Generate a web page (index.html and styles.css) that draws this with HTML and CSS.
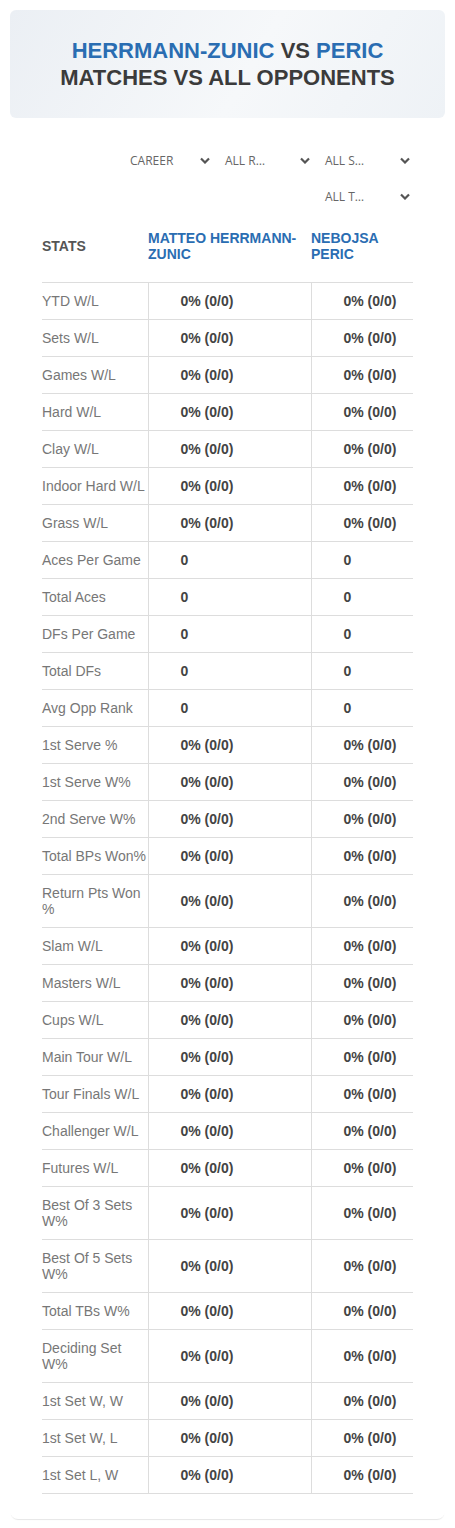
FILE: index.html
```html
<!DOCTYPE html>
<html lang="en">
<head>
  <meta charset="UTF-8">
  <meta name="viewport" content="width=device-width, initial-scale=1.0">
  <title>Herrmann-Zunic vs Peric</title>
  <link rel="stylesheet" href="styles.css">
</head>
<body>
  <div class="page">
    <div class="card">
      <header class="hero">
        <h1><span class="blue">HERRMANN-ZUNIC</span> VS <span class="blue">PERIC</span><br>MATCHES VS ALL OPPONENTS</h1>
      </header>

      <div class="filters">
        <div class="select narrow">CAREER<svg viewBox="0 0 10 6"><path d="M1 1l4 4 4-4"/></svg></div>
        <div class="select">ALL R…<svg viewBox="0 0 10 6"><path d="M1 1l4 4 4-4"/></svg></div>
        <div class="select">ALL S…<svg viewBox="0 0 10 6"><path d="M1 1l4 4 4-4"/></svg></div>
        <div class="select">ALL T…<svg viewBox="0 0 10 6"><path d="M1 1l4 4 4-4"/></svg></div>
      </div>

      <table class="stats">
        <thead>
          <tr>
            <th class="label">STATS</th>
            <th class="player">MATTEO HERRMANN-ZUNIC</th>
            <th class="player">NEBOJSA PERIC</th>
          </tr>
        </thead>
        <tbody id="rows"></tbody>
      </table>
    </div>
  </div>

  <script>
    const pct = "0% (0/0)";
    const rows = [
      ["YTD W/L", pct], ["Sets W/L", pct], ["Games W/L", pct], ["Hard W/L", pct],
      ["Clay W/L", pct], ["Indoor Hard W/L", pct], ["Grass W/L", pct],
      ["Aces Per Game", "0"], ["Total Aces", "0"], ["DFs Per Game", "0"],
      ["Total DFs", "0"], ["Avg Opp Rank", "0"],
      ["1st Serve %", pct], ["1st Serve W%", pct], ["2nd Serve W%", pct],
      ["Total BPs Won%", pct], ["Return Pts Won %", pct], ["Slam W/L", pct],
      ["Masters W/L", pct], ["Cups W/L", pct], ["Main Tour W/L", pct],
      ["Tour Finals W/L", pct], ["Challenger W/L", pct], ["Futures W/L", pct],
      ["Best Of 3 Sets W%", pct], ["Best Of 5 Sets W%", pct], ["Total TBs W%", pct],
      ["Deciding Set W%", pct], ["1st Set W, W", pct], ["1st Set W, L", pct],
      ["1st Set L, W", pct]
    ];
    const body = document.getElementById("rows");
    rows.forEach(function(r) {
      const tr = document.createElement("tr");
      tr.innerHTML = '<td class="label">' + r[0] + '</td><td class="val">' + r[1] + '</td><td class="val">' + r[1] + '</td>';
      body.appendChild(tr);
    });
  </script>
</body>
</html>
```

FILE: styles.css
```css
body {
  margin: 0;
  background: #fff;
  font-family: "Liberation Sans", Arial, sans-serif;
}
.page {
  padding: 10px;
}
.card {
  border-radius: 8px;
  box-shadow: 0 2px 1px -1px rgba(0, 0, 0, 0.1);
  padding-bottom: 25px;
}
.hero {
  background: linear-gradient(120deg, #ebeff4 0%, #f6f8fa 55%, #eef2f6 100%);
  border-radius: 6px;
  padding: 27px 10px;
  text-align: center;
}
.hero h1 {
  margin: 0;
  font-size: 22px;
  line-height: 27px;
  font-weight: bold;
  color: #3b3b3b;
}
.blue {
  color: #2a6db2;
}
.filters {
  display: flex;
  flex-wrap: wrap;
  justify-content: flex-end;
  column-gap: 12px;
  row-gap: 4px;
  margin: 26px 32px 10px;
}
.select {
  width: 88px;
  height: 32px;
  display: flex;
  align-items: center;
  justify-content: space-between;
  font-family: "Open Sans", sans-serif;
  font-size: 12px;
  color: #666;
  box-sizing: border-box;
  padding-right: 3px;
}
.select.narrow {
  width: 83px;
}
.select svg {
  width: 10px;
  height: 7px;
  fill: none;
  stroke: #555;
  stroke-width: 2.2;
}
.stats {
  margin: 0 32px;
  width: calc(100% - 64px);
  border-collapse: collapse;
  table-layout: fixed;
}
.stats th {
  text-align: left;
  font-size: 14px;
  line-height: 16px;
  font-weight: bold;
  padding: 8px 0 20px;
  vertical-align: middle;
}
.stats th.label {
  width: 106px;
  color: #555;
}
.stats th.player {
  color: #2a6db2;
}
.stats th.player:last-child {
  width: 102px;
}
.stats td {
  font-size: 14px;
  line-height: 16px;
  padding: 10px 0;
  border-top: 1px solid #ddd;
  border-bottom: 1px solid #ddd;
}
.stats td.label {
  color: #777;
  padding-right: 0;
}
.stats td.val {
  border-left: 1px solid #ddd;
  padding-left: 32px;
  font-weight: bold;
  color: #444;
}
```
